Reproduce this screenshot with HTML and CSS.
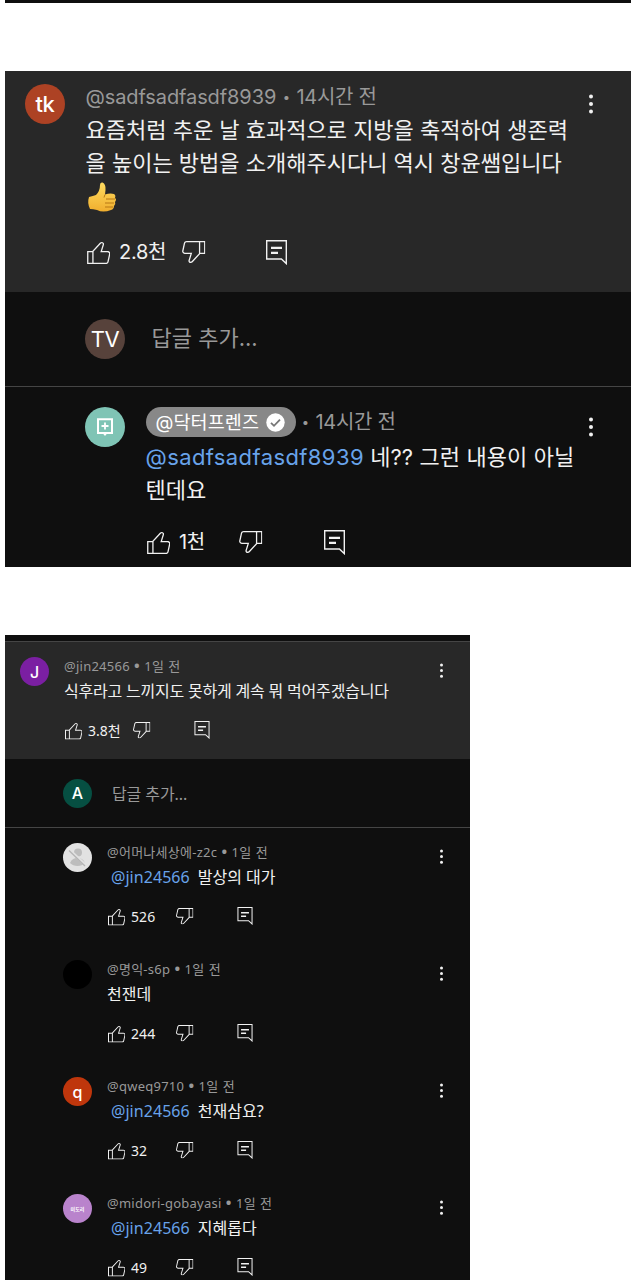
FILE: index.html
```
<!DOCTYPE html>
<html lang="ko">
<head>
<meta charset="utf-8">
<title>댓글</title>
<link rel="stylesheet" href="styles.css">
</head>
<body>
<svg class="defs" width="0" height="0">
  <symbol id="like" viewBox="3 4 18 17"><path d="M18.77,11h-4.23l1.52-4.94C16.38,5.03,15.54,4,14.38,4c-0.58,0-1.14,0.24-1.52,0.65L7,11H3v10h4h1h9.43c1.06,0,1.98-0.67,2.19-1.61l1.34-6C21.23,12.15,20.18,11,18.77,11z M7,20H4v-8h3V20z M19.98,13.17l-1.34,6C18.54,19.65,18.03,20,17.43,20H8v-8.61l5.6-6.06C13.79,5.12,14.08,5,14.38,5c0.26,0,0.5,0.11,0.63,0.3c0.07,0.1,0.15,0.26,0.09,0.47l-1.52,4.94L13.18,12h1.35h4.23c0.41,0,0.8,0.17,1.03,0.46C19.92,12.61,20.05,12.86,19.98,13.17z"/></symbol>
  <symbol id="note" viewBox="0 0 21 25"><path d="M.7.7H20.3V23.6L15.4 19H.7Z" fill="none" stroke="currentColor" stroke-width="1.4"/><path d="M5 6.8h11v2.2H5zM5 11.8h7v2.2H5z"/></symbol>
  <symbol id="dots" viewBox="0 0 6 20"><circle cx="3" cy="2.5" r="2"/><circle cx="3" cy="10" r="2"/><circle cx="3" cy="17.5" r="2"/></symbol>
</svg>

<div class="strip"></div>

<main class="card large">
  <section class="comment root">
    <div class="avatar rust">tk</div>
    <div class="body">
      <div class="meta"><span class="handle">@sadfsadfasdf8939</span><span class="dot">•</span><span class="time">14시간 전</span></div>
      <div class="text">요즘처럼 추운 날 효과적으로 지방을 축적하여 생존력<br>을 높이는 방법을 소개해주시다니 역시 창윤쌤입니다</div>
      <div class="emoji"><svg width="30" height="31" viewBox="0 0 30 31">
        <defs><linearGradient id="skin" x1="0" y1="0" x2="0" y2="1"><stop offset="0" stop-color="#ffdc60"/><stop offset="1" stop-color="#f0ae2e"/></linearGradient></defs>
        <path fill="url(#skin)" d="M2 15Q6 14 9 13Q13 9 13 3Q13 0 15.5 0.5Q19 2 18.5 8L18 12.5Q23 11 27 12Q29 13 28 16Q30 17 28 20Q29 22 27 24Q27 27 24 28Q16 31 10 28Q6 27 3 27Q0 21 2 15Z"/>
        <path d="M18 12.5l-1 3M19 17h9M18 21h9M18 25h8" fill="none" stroke="#b87914" stroke-width="1"/>
      </svg></div>
      <div class="actions"><svg class="ic like"><use href="#like"/></svg><span class="count">2.8천</span><svg class="ic dislike"><use href="#like"/></svg><svg class="ic note"><use href="#note"/></svg></div>
    </div>
    <svg class="menu"><use href="#dots"/></svg>
  </section>
  <section class="add"><div class="avatar brown">TV</div><span class="placeholder">답글 추가...</span></section>
  <section class="comment reply">
    <div class="avatar mint"><svg width="18" height="20" viewBox="0 0 18 20"><path d="M2 2.2H16V16H2Z" fill="none" stroke="#fff" stroke-width="2"/><path d="M9 5.5v7M5.5 9h7" stroke="#fff" stroke-width="1.8"/><path d="M6.5 16h5L9 19Z" fill="#fff"/></svg></div>
    <div class="body">
      <div class="meta"><span class="pill"><span class="channel">@닥터프렌즈</span><svg width="19" height="19" viewBox="0 0 19 19"><circle cx="9.5" cy="9.5" r="9.2" fill="#fff"/><path d="M5 9.8l3 3 6-6.2" fill="none" stroke="#777" stroke-width="1.8"/></svg></span><span class="dot">•</span><span class="time">14시간 전</span></div>
      <div class="text"><span class="mention">@sadfsadfasdf8939</span> <span class="after">네?? 그런 내용이 아닐</span><br>텐데요</div>
      <div class="actions"><svg class="ic like"><use href="#like"/></svg><span class="count">1천</span><svg class="ic dislike"><use href="#like"/></svg><svg class="ic note"><use href="#note"/></svg></div>
    </div>
    <svg class="menu"><use href="#dots"/></svg>
  </section>
</main>

<main class="card small">
  <section class="comment root">
    <div class="avatar purple">J</div>
    <div class="body">
      <div class="meta">@jin24566 <b>•</b> 1일 전</div>
      <div class="text">식후라고 느끼지도 못하게 계속 뭐 먹어주겠습니다</div>
      <div class="actions"><svg class="ic like"><use href="#like"/></svg><span class="count">3.8천</span><svg class="ic dislike"><use href="#like"/></svg><svg class="ic note"><use href="#note"/></svg></div>
    </div>
    <svg class="menu"><use href="#dots"/></svg>
  </section>
  <section class="add"><div class="avatar green">A</div><span class="placeholder">답글 추가...</span></section>
  <section class="comment reply">
    <div class="avatar pale"><svg width="29" height="29" viewBox="0 0 29 29"><g fill="#bdbdbd"><circle cx="15" cy="9.5" r="4"/><path d="M7 20Q9 15 14.5 15T22 20Q19 23 14.5 23T7 20Z"/></g><path d="M6 6.5L22.5 22" stroke="#e2e2e2" stroke-width="3"/><path d="M6 7.5L22 23" stroke="#b4b4b4" stroke-width="1.3"/></svg></div>
    <div class="body">
      <div class="meta">@어머나세상에-z2c <b>•</b> 1일 전</div>
      <div class="text"><span class="mention">@jin24566</span>발상의 대가</div>
      <div class="actions"><svg class="ic like"><use href="#like"/></svg><span class="count">526</span><svg class="ic dislike"><use href="#like"/></svg><svg class="ic note"><use href="#note"/></svg></div>
    </div>
    <svg class="menu"><use href="#dots"/></svg>
  </section>
  <section class="comment reply">
    <div class="avatar black"></div>
    <div class="body">
      <div class="meta">@명익-s6p <b>•</b> 1일 전</div>
      <div class="text">천잰데</div>
      <div class="actions"><svg class="ic like"><use href="#like"/></svg><span class="count">244</span><svg class="ic dislike"><use href="#like"/></svg><svg class="ic note"><use href="#note"/></svg></div>
    </div>
    <svg class="menu"><use href="#dots"/></svg>
  </section>
  <section class="comment reply">
    <div class="avatar orange">q</div>
    <div class="body">
      <div class="meta">@qweq9710 <b>•</b> 1일 전</div>
      <div class="text"><span class="mention">@jin24566</span>천재삼요?</div>
      <div class="actions"><svg class="ic like"><use href="#like"/></svg><span class="count">32</span><svg class="ic dislike"><use href="#like"/></svg><svg class="ic note"><use href="#note"/></svg></div>
    </div>
    <svg class="menu"><use href="#dots"/></svg>
  </section>
  <section class="comment reply">
    <div class="avatar lilac">미도리</div>
    <div class="body">
      <div class="meta">@midori-gobayasi <b>•</b> 1일 전</div>
      <div class="text"><span class="mention">@jin24566</span>지혜롭다</div>
      <div class="actions"><svg class="ic like"><use href="#like"/></svg><span class="count">49</span><svg class="ic dislike"><use href="#like"/></svg><svg class="ic note"><use href="#note"/></svg></div>
    </div>
    <svg class="menu"><use href="#dots"/></svg>
  </section>
</main>
</body>
</html>
```

FILE: styles.css
```
* { box-sizing: border-box; }
html, body { margin: 0; height: 1280px; overflow: hidden; background: #fff; }
svg { display: block; flex: none; fill: currentColor; }
.defs { position: absolute; }
.strip { width: 626px; height: 3px; margin-left: 5px; background: #0f0f0f; }

.card { margin-left: 5px; background: #0f0f0f; color: #f1f1f1; white-space: nowrap; overflow: hidden; }
.comment { display: flex; align-items: flex-start; }
.body { flex: 1; min-width: 0; }
.root { background: #282828; }
.avatar { flex: none; display: flex; align-items: center; justify-content: center; border-radius: 50%; color: #fff; }
.meta { display: flex; align-items: center; color: #999; }
.mention { color: #68a3ea; }
.actions { display: flex; align-items: center; }
.dislike { transform: rotate(180deg); }
.add { display: flex; align-items: center; border-bottom: 1px solid #454545; color: #999; }

.rust { background: #ad4224; }
.brown { background: #57423b; }
.mint { background: #7fc4b5; }
.purple { background: #7b1fa2; }
.green { background: #064f42; }
.pale { background: #e2e2e2; }
.black { background: #000; }
.orange { background: #bf360c; }
.lilac { background: #b983cc; }

/* Large thread */
.large { width: 625.5px; height: 496px; margin-top: 68px; font-family: Inter, "Noto Sans CJK KR", sans-serif; }
.large .avatar { width: 40px; height: 40px; font-size: 22px; letter-spacing: -0.4px; }
.large .rust { font-weight: 500; }
.large .root { height: 221px; padding: 13px 37px 0 20px; }
.large .root .body { margin: 2px 0 0 20.5px; }
.large .meta { height: 22px; font-size: 20px; line-height: 22px; }
.large .handle { width: 191px; letter-spacing: -0.1px; }
.large .dot { width: 20px; text-align: center; font-size: 13px; }
.large .time { letter-spacing: -0.3px; }
.large .text { margin-top: 6px; font-size: 22px; line-height: 33px; }
.large .emoji { height: 33px; padding: 2px 0 0 1px; }
.large .actions { height: 26px; margin: 26px 0 0 1px; font-size: 20px; line-height: 26px; letter-spacing: -0.3px; }
.large .like, .large .dislike { width: 23.5px; height: 22px; }
.large .like { margin-top: 2px; }
.large .count { width: 47px; margin-left: 9px; }
.large .dislike { margin-left: 15.5px; }
.large .note { width: 21px; height: 25px; margin-left: 61px; }
.large .menu { width: 6px; height: 20px; margin-top: 10px; }
.large .add { height: 95px; padding-left: 80px; font-size: 22px; }
.large .placeholder { margin: -6px 0 0 26.5px; }
.large .reply { padding: 20px 37px 0 80px; }
.large .reply .body { margin-left: 20.5px; }
.large .reply .meta { height: 30px; }
.large .pill { display: flex; align-items: center; width: 150px; height: 30px; padding-left: 10px; border-radius: 15px; background: #888; color: #fff; font-size: 18.5px; }
.large .channel { width: 110px; letter-spacing: 0.1px; }
.large .reply .mention { letter-spacing: 0.4px; }
.large .after { letter-spacing: 0.1px; }
.large .reply .text { margin-top: 4px; }
.large .reply .actions { margin-top: 22px; }
.large .reply .count { width: 26px; }
.large .reply .dislike { margin-left: 34px; }

/* Small thread */
.small { width: 465px; height: 645px; margin-top: 68px; padding-top: 6px; font-family: "Noto Sans", "Noto Sans CJK KR", sans-serif; }
.small .avatar { width: 29px; height: 29px; font: 500 16px Inter, sans-serif; }
.small .root { height: 118px; padding: 15px 26px 0 15px; border-top: 1px solid #454545; }
.small .root .body { margin-left: 15px; }
.small .meta { display: block; height: 18px; font-size: 13px; line-height: 18px; letter-spacing: 0.25px; word-spacing: 0.6px; }
.small .meta b { font-size: 15px; line-height: 1; }
.small .text { height: 24px; margin-top: 4px; font-size: 16px; line-height: 24px; }
.small .root .text { letter-spacing: -0.2px; }
.small .mention { margin: 0 8px 0 4px; letter-spacing: 0.05px; }
.small .actions { height: 20px; margin-top: 18px; font-size: 14px; line-height: 20px; }
.small .like, .small .dislike { width: 17.5px; height: 16.5px; }
.small .like { margin: 1px 0 0 0.5px; }
.small .dislike { margin-top: -1px; }
.small .count { width: 44.5px; margin-left: 6px; letter-spacing: 0.1px; }
.small .note { width: 16px; height: 18px; margin: -2px 0 0 44px; }
.small .root .count { width: 33.5px; letter-spacing: 0; }
.small .root .dislike { margin-left: 11px; }
.small .menu { width: 5px; height: 15px; margin-top: 6px; }
.small .add { height: 69px; padding-left: 58px; font-size: 16px; }
.small .placeholder { margin: -1px 0 0 20px; letter-spacing: -0.1px; }
.small .reply { height: 117px; padding: 15px 26px 0 58px; }
.small .reply .body { margin-left: 15px; }
.small .avatar.lilac { font: 700 5px "Noto Sans CJK KR", sans-serif; }
```
